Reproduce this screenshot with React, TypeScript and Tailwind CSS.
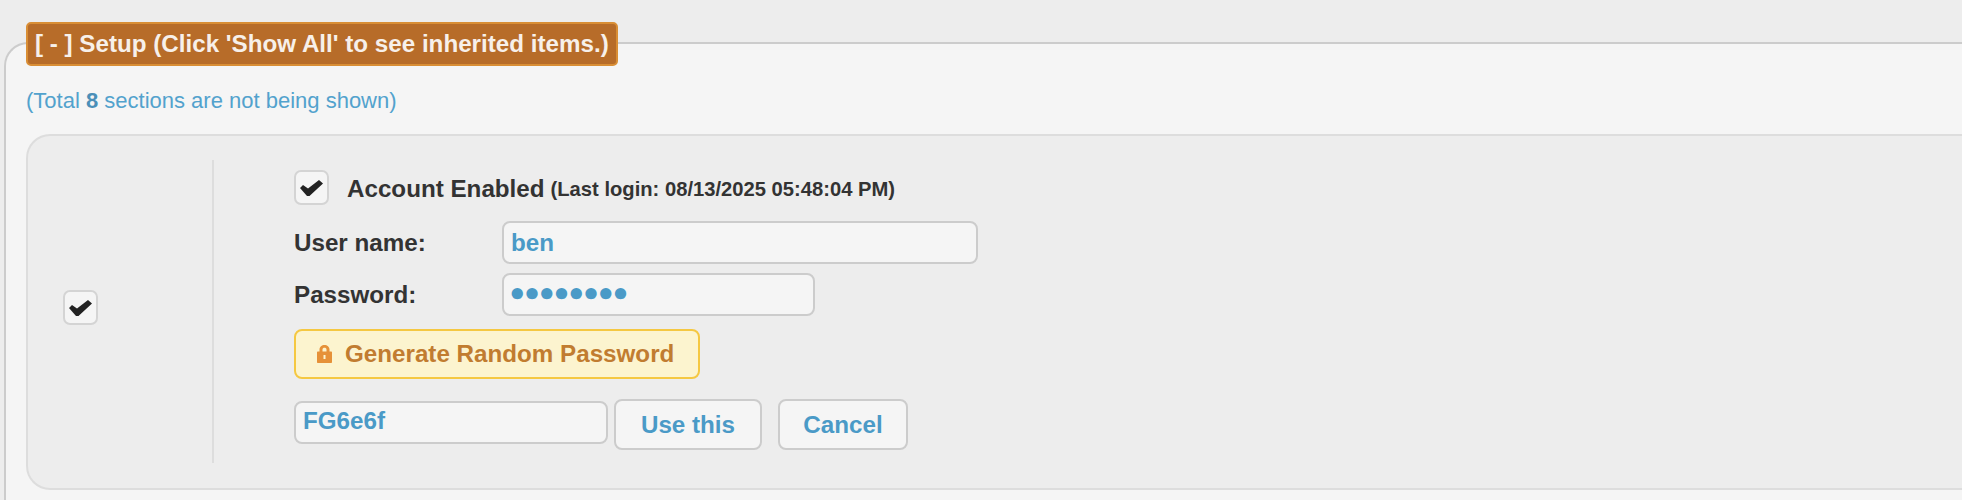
function Check({ className = "" }: { className?: string }) {
  return (
    <span className={`flex h-[35px] w-[35px] shrink-0 items-center justify-center rounded-[7px] border-2 border-[#d4d4d4] bg-[#f5f5f5] ${className}`}>
      <svg viewBox="0 0 23 16" className="h-[16px] w-[23px] text-[#222222]" fill="currentColor">
        <path d="M0 8 L3 5 L8 8.5 L19 0 L23 3.5 L9.5 16 L7 16 Z" />
      </svg>
    </span>
  );
}

function Lock() {
  return (
    <svg viewBox="0 0 15 18" className="h-[18px] w-[15px] text-[#e69138]" fill="currentColor">
      <path fillRule="evenodd" d="M2.5 6.5 V4.5 C2.5 1.8 4.8 0 7.5 0 C10.2 0 12.5 1.8 12.5 4.5 V6.5 H14 C14.6 6.5 15 6.9 15 7.5 V17 C15 17.6 14.6 18 14 18 H1 C0.4 18 0 17.6 0 17 V7.5 C0 6.9 0.4 6.5 1 6.5 Z M5.5 6.5 H9.5 V4.5 C9.5 3.4 8.6 2.8 7.5 2.8 C6.4 2.8 5.5 3.4 5.5 4.5 Z M6.5 10 V14 H8.5 V10 Z" />
    </svg>
  );
}

const inputCls =
  "rounded-[8px] border-2 border-[#cccccc] bg-[#f5f5f5] px-[7px] text-[24.2px] font-bold text-[#4a9ac7] outline-none";

export default function App() {
  return (
    <div className="h-[500px] w-full overflow-hidden bg-[#ededed] pt-[22px] pl-[4px] font-['Liberation_Sans',Arial,sans-serif]">
      <div className="relative mt-[20px] h-[600px] w-[2100px] rounded-tl-[24px] border-t-2 border-l-2 border-[#cccccc] bg-[#f5f5f5] pl-[20px]">
        <div className="absolute top-[-22px] left-[20px] flex h-[44px] w-[592px] items-center rounded-[5px] border-2 border-[#d98e35] bg-[#b76c29] pl-[7px] text-[24.2px] font-bold whitespace-nowrap text-[#f7f0ea]">
          [ - ] Setup (Click 'Show All' to see inherited items.)
        </div>
        <p className="pt-[44px] text-[22px] leading-[26px] text-[#52a2cd]">
          (Total <b className="font-bold text-[#4a8fb8]">8</b> sections are not being shown)
        </p>
        <div className="mt-[20px] flex h-[356px] rounded-l-[24px] border-2 border-r-0 border-[#dddddd] bg-[#ededed] pt-[24px] pb-[25px]">
          <div className="flex w-[186px] items-center border-r-2 border-[#dddddd] pl-[35px]">
            <Check className="relative top-[-4px]" />
          </div>
          <div className="pt-[8px] pl-[80px] text-[#333333]">
            <div className="flex items-center font-bold">
              <Check />
              <span className="ml-[18px] pt-[3px] text-[24.2px]">Account Enabled</span>
              <span className="ml-[6px] pt-[3px] text-[20.2px]">(Last login: 08/13/2025 05:48:04 PM)</span>
            </div>
            <div className="mt-[14px] flex items-center text-[24.2px] font-bold">
              <label className="w-[208px]">User name:</label>
              <input readOnly value="ben" className={`${inputCls} h-[43px] w-[476px]`} />
            </div>
            <div className="mt-[9px] flex items-center text-[24.2px] font-bold">
              <label className="w-[208px]">Password:</label>
              <input readOnly type="password" value="abcdefgh" className="h-[43px] w-[313px] rounded-[8px] border-2 border-[#cccccc] bg-[#f5f5f5] px-[3px] font-['DejaVu_Sans',sans-serif] text-[32px] font-bold tracking-[-5.7px] text-[#4a9ac7] outline-none" />
            </div>
            <button className="mt-[13px] flex h-[50px] w-[406px] items-center rounded-[8px] border-2 border-[#f5c842] bg-[#fcf4cf] pl-[21px] text-[24.2px] font-bold text-[#c17c30]">
              <Lock />
              <span className="ml-[13px]">Generate Random Password</span>
            </button>
            <div className="mt-[20px] flex items-start">
              <input readOnly value="FG6e6f" className={`${inputCls} mt-[2px] h-[43px] w-[314px] pb-[3px]`} />
              <button className="ml-[6px] h-[51px] w-[148px] rounded-[8px] border-2 border-[#cccccc] bg-[#f5f5f5] text-[24.2px] font-bold text-[#4a9ac7]">Use this</button>
              <button className="ml-[16px] h-[51px] w-[130px] rounded-[8px] border-2 border-[#cccccc] bg-[#f5f5f5] text-[24.2px] font-bold text-[#4a9ac7]">Cancel</button>
            </div>
          </div>
        </div>
      </div>
    </div>
  );
}
